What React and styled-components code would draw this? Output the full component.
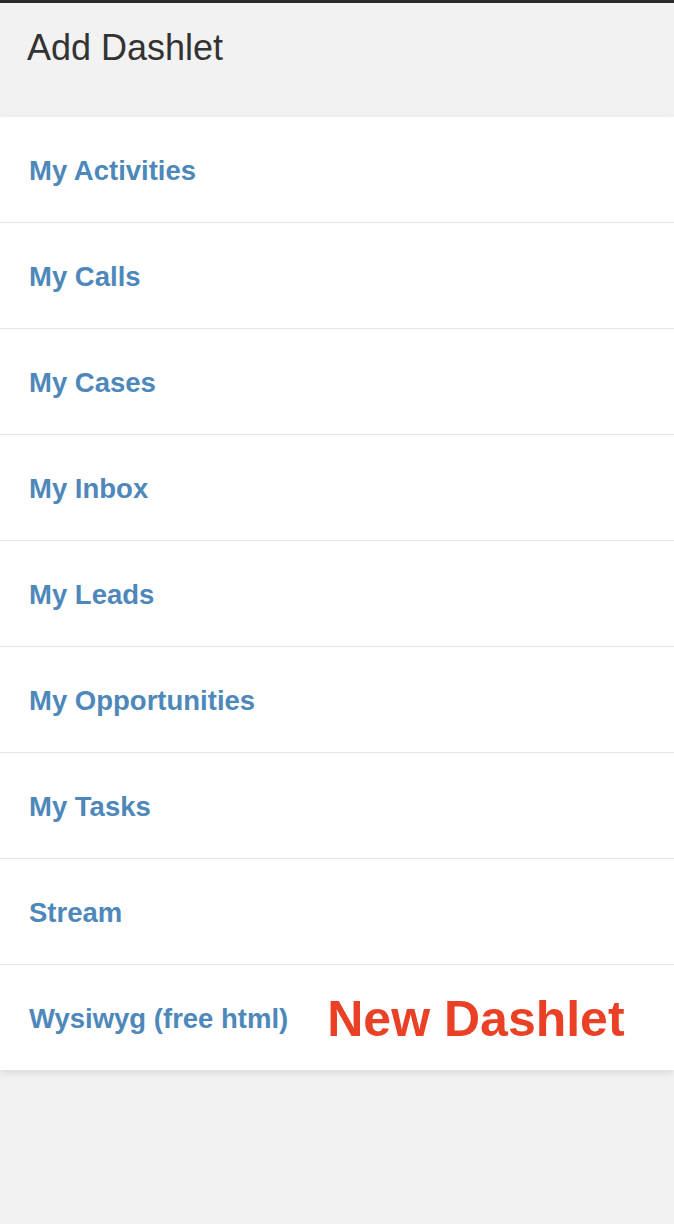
import React from 'react';
import styled, { createGlobalStyle } from 'styled-components';

const GlobalStyle = createGlobalStyle`
  html, body {
    margin: 0;
    padding: 0;
    background: #f2f2f2;
    font-family: "Liberation Sans", Arial, sans-serif;
  }
`;

const Page = styled.div`
  min-height: 1224px;
  background: #f2f2f2;
  border-top: 3px solid #2b2b2b;
  box-sizing: border-box;
`;

const Header = styled.div`
  height: 114px;
  padding: 25px 0 0 27px;
  box-sizing: border-box;
`;

const Title = styled.h1`
  margin: 0;
  font-size: 36px;
  font-weight: normal;
  color: #333333;
  line-height: 40px;
`;

const List = styled.ul`
  list-style: none;
  margin: 0;
  padding: 0;
  background: #ffffff;
  box-shadow: 0 3px 8px rgba(0, 0, 0, 0.1);
`;

const Row = styled.li`
  height: 102px;
  display: flex;
  align-items: center;
  padding: 3px 0 0 29px;
  border-top: ${p => (p.first ? 'none' : '1px solid #e4e6e6')};
`;

const Link = styled.a`
  color: #4e88bb;
  font-size: 27.5px;
  font-weight: bold;
  text-decoration: none;
`;

const Badge = styled.span`
  margin-left: 39px;
  color: #ea4126;
  font-size: 50px;
  font-weight: bold;
  line-height: 1;
`;

const items = [
  'My Activities',
  'My Calls',
  'My Cases',
  'My Inbox',
  'My Leads',
  'My Opportunities',
  'My Tasks',
  'Stream',
  'Wysiwyg (free html)',
];

export default function App() {
  return (
    <Page>
      <GlobalStyle />
      <Header>
        <Title>Add Dashlet</Title>
      </Header>
      <List>
        {items.map((name, i) => (
          <Row key={name} first={i === 0}>
            <Link href="#">{name}</Link>
            {i === items.length - 1 && <Badge>New Dashlet</Badge>}
          </Row>
        ))}
      </List>
    </Page>
  );
}
